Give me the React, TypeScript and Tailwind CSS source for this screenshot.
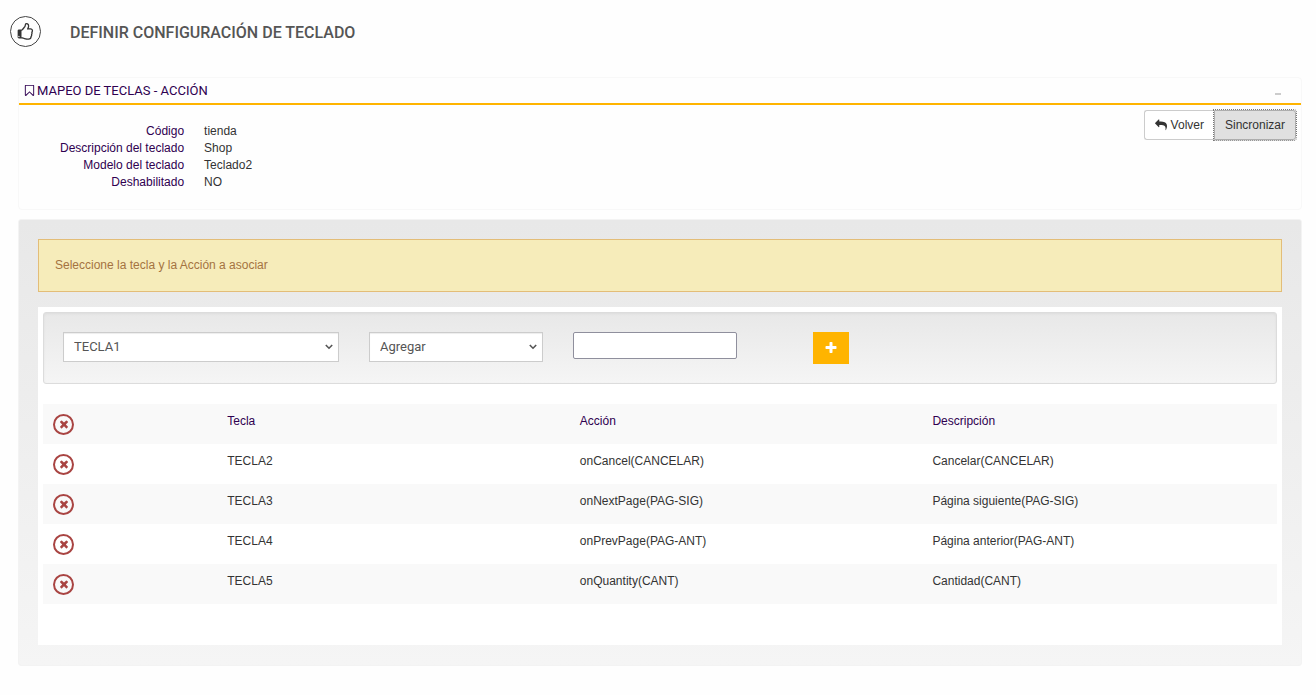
import React, { useState } from 'react';

interface KeyMapping {
  id: string;
  tecla: string;
  accion: string;
  descripcion: string;
}

interface IconProps {
  path: string;
  className?: string;
}

const ICONS = {
  thumbsUp:
    'M256 1344q0-26-19-45t-45-19-45 19-19 45 19 45 45 19 45-19 19-45zm1216-576q0-51-39-89.5t-89-38.5h-352q0-58 48-159.5t48-160.5q0-98-32-145t-128-47q-26 26-38 85t-30.5 125.5-59.5 109.5q-22 23-77 91-4 5-23 30t-31.5 41-34.5 42.5-40 44-38.5 35.5-40 27-35.5 9h-32v640h32q13 0 31.5 3t33 6.5 38 11 35 11.5 35.5 12.5 29 10.5q211 73 342 73h121q192 0 192-167 0-26-5-56 30-16 47.5-52.5t17.5-73.5-18-69q53-50 53-119 0-25-10-55.5t-25-47.5q32-1 53.5-47t21.5-81zm128-1q0 89-49 163 9 33 9 69 0 77-38 144 3 21 3 43 0 101-60 178 1 139-85 219.5t-227 80.5h-129q-96 0-189.5-22.5t-216.5-65.5q-116-40-138-40h-288q-53 0-90.5-37.5t-37.5-90.5v-640q0-53 37.5-90.5t90.5-37.5h274q36-24 137-155 58-75 107-128 24-25 35.5-85.5t30.5-126.5 62-108q39-37 90-37 84 0 151 32.5t102 101.5 35 186q0 93-48 192h176q104 0 180 76t76 179z',
  bookmark:
    'M1408 256h-1024v1242l423-406 89-85 89 85 423 406v-1242zm12-128q23 0 44 9 33 13 52.5 41t19.5 62v1289q0 34-19.5 62t-52.5 41q-19 8-44 8-48 0-83-32l-441-424-441 424q-36 33-83 33-23 0-44-9-33-13-52.5-41t-19.5-62v-1289q0-34 19.5-62t52.5-41q21-9 44-9h1048z',
  reply:
    'M1792 1120q0 166-127 451-3 7-10.5 24t-13.5 30-13 22q-12 17-28 17-15 0-23.5-10t-8.5-25q0-9 2.5-26.5t2.5-23.5q5-68 5-123 0-101-17.5-181t-48.5-138.5-80-101-105.5-69.5-133-42.5-154-21.5-175.5-6h-224v256q0 26-19 45t-45 19-45-19l-512-512q-19-19-19-45t19-45l512-512q19-19 45-19t45 19 19 45v256h224q713 0 875 403 53 134 53 333z',
  plus:
    'M1600 736v192q0 40-28 68t-68 28h-416v416q0 40-28 68t-68 28h-192q-40 0-68-28t-28-68v-416h-416q-40 0-68-28t-28-68v-192q0-40 28-68t68-28h416v-416q0-40 28-68t68-28h192q40 0 68 28t28 68v416h416q40 0 68 28t28 68z',
  times:
    'M1490 1322q0 40-28 68l-136 136q-28 28-68 28t-68-28l-294-294-294 294q-28 28-68 28t-68-28l-136-136q-28-28-28-68t28-68l294-294-294-294q-28-28-28-68t28-68l136-136q28-28 68-28t68 28l294 294 294-294q28-28 68-28t68 28l136 136q28 28 28 68t-28 68l-294 294 294 294q28 28 28 68z',
};

const details = [
  { label: 'Código', value: 'tienda' },
  { label: 'Descripción del teclado', value: 'Shop' },
  { label: 'Modelo del teclado', value: 'Teclado2' },
  { label: 'Deshabilitado', value: 'NO' },
];

const initialMappings: KeyMapping[] = [
  { id: '2', tecla: 'TECLA2', accion: 'onCancel(CANCELAR)', descripcion: 'Cancelar(CANCELAR)' },
  { id: '3', tecla: 'TECLA3', accion: 'onNextPage(PAG-SIG)', descripcion: 'Página siguiente(PAG-SIG)' },
  { id: '4', tecla: 'TECLA4', accion: 'onPrevPage(PAG-ANT)', descripcion: 'Página anterior(PAG-ANT)' },
  { id: '5', tecla: 'TECLA5', accion: 'onQuantity(CANT)', descripcion: 'Cantidad(CANT)' },
];

function Icon({ path, className }: IconProps) {
  return (
    <svg viewBox="0 0 1792 1792" fill="currentColor" aria-hidden="true" className={className}>
      <path d={path} />
    </svg>
  );
}

function SelectBox({ label, options, className }: { label: string; options: string[]; className: string }) {
  return (
    <div className={`relative ${className}`}>
      <select
        aria-label={label}
        className="block h-[30px] w-full appearance-none border border-[#ccc] bg-white pl-[10px] pr-6 font-[Roboto,sans-serif] text-[13px] text-[#555] shadow-[inset_0_1px_1px_rgba(0,0,0,0.075)]"
      >
        {options.map((option) => (
          <option key={option}>{option}</option>
        ))}
      </select>
      <svg
        viewBox="0 0 8 6"
        fill="none"
        stroke="#555"
        strokeWidth="1.6"
        aria-hidden="true"
        className="pointer-events-none absolute right-[6px] top-3 h-[6px] w-2"
      >
        <path d="M0.8 1 4 4.2 7.2 1" />
      </svg>
    </div>
  );
}

function DeleteButton({ label, onClick }: { label: string; onClick: () => void }) {
  return (
    <button
      type="button"
      aria-label={label}
      onClick={onClick}
      className="flex size-[21px] items-center justify-center rounded-full border-2 border-[#a94442] text-[#a94442]"
    >
      <Icon path={ICONS.times} className="size-3" />
    </button>
  );
}

export default function App() {
  const [mappings, setMappings] = useState(initialMappings);
  const [value, setValue] = useState('');

  const removeMapping = (id: string) => {
    setMappings(mappings.filter((mapping) => mapping.id !== id));
  };

  return (
    <div className="min-h-screen bg-[#fefefe] font-['Liberation_Sans',Arial,sans-serif] text-xs text-[#333]">
      {/* Page title */}
      <header className="flex items-center gap-[29px] px-[10px] pt-4">
        <span className="flex size-[31px] items-center justify-center rounded-full border border-[#444] text-[#333]">
          <Icon path={ICONS.thumbsUp} className="size-[18px]" />
        </span>
        <h1 className="pt-[2px] font-[Roboto,sans-serif] text-base font-medium text-[#555]">
          DEFINIR CONFIGURACIÓN DE TECLADO
        </h1>
      </header>

      <main className="pl-[18px] pr-[14px] pt-[30px]">
        {/* Keyboard details */}
        <section className="rounded border border-[#f8f8f8] bg-[#fefefe]">
          <div className="flex h-[27px] items-center justify-between border-b-2 border-[#ffb400] pl-1 pr-5">
            <h2 className="flex items-center font-[Roboto,sans-serif] text-[13px] text-[#2f0050]">
              <Icon path={ICONS.bookmark} className="mr-[1px] size-[13px]" />
              MAPEO DE TECLAS - ACCIÓN
            </h2>
            <button type="button" aria-label="Contraer" className="pt-[6px]">
              <span className="block h-[2px] w-[6px] bg-[#ccc]" />
            </button>
          </div>

          <div className="flex items-start justify-between pb-[18px] pr-[5px] pt-[5px]">
            <dl className="grid grid-cols-[auto_auto] gap-x-5 pl-[41px] pt-[13px] leading-[17px]">
              {details.map((detail) => (
                <React.Fragment key={detail.label}>
                  <dt className="text-right text-[#2f0050]">{detail.label}</dt>
                  <dd>{detail.value}</dd>
                </React.Fragment>
              ))}
            </dl>
            <div className="flex">
              <button
                type="button"
                className="flex h-[30px] items-center gap-1 rounded-l-[3px] border border-r-0 border-[#ccc] bg-white px-[10px]"
              >
                <Icon path={ICONS.reply} className="size-3" />
                Volver
              </button>
              <button
                type="button"
                className="h-[30px] rounded-r-[3px] border border-[#adadad] bg-[#e0e0e0] px-[10px] outline-1 outline-dotted outline-[#777]"
              >
                Sincronizar
              </button>
            </div>
          </div>
        </section>

        {/* Mapping editor */}
        <section className="mt-[9px] rounded-[3px] border border-[#f3f3f3] bg-linear-to-b from-[#e8e8e8] to-[#f5f5f5] p-[19px] pb-5">
          <p className="border border-[#e3bd78] bg-[#f6ecba] px-4 py-[17px] leading-[17px] text-[#a47341]">
            Seleccione la tecla y la Acción a asociar
          </p>

          <div className="mt-[15px] bg-white p-[5px] pb-[41px]">
            <form
              onSubmit={(e) => e.preventDefault()}
              className="grid grid-cols-12 gap-x-[30px] rounded-[3px] border border-[#dcdcdc] bg-linear-to-b from-[#e8e8e8] to-[#f5f5f5] p-[19px] shadow-[inset_0_1px_3px_rgba(0,0,0,0.05)]"
            >
              <SelectBox label="Tecla" options={['TECLA1']} className="col-span-3" />
              <SelectBox label="Acción" options={['Agregar']} className="col-span-2" />
              <input
                type="text"
                aria-label="Descripción"
                value={value}
                onChange={(e) => setValue(e.target.value)}
                className="col-span-2 h-[27px] w-[164px] rounded-xs border border-[#8f8f9d] bg-white px-1"
              />
              <div className="flex justify-end">
                <button
                  type="submit"
                  aria-label="Añadir"
                  className="flex h-8 w-9 items-center justify-center bg-[#ffb400] text-white"
                >
                  <Icon path={ICONS.plus} className="size-[14px]" />
                </button>
              </div>
            </form>

            <table className="mt-5 w-full table-fixed text-left">
              <thead>
                <tr className="h-10 bg-[#f9f9f9] text-[#2f0050]">
                  <th className="w-1/7 px-[10px] font-normal">
                    <DeleteButton label="Eliminar todo" onClick={() => setMappings([])} />
                  </th>
                  <th className="w-2/7 px-2 pt-[9px] align-top font-normal">Tecla</th>
                  <th className="w-2/7 px-2 pt-[9px] align-top font-normal">Acción</th>
                  <th className="w-2/7 px-2 pt-[9px] align-top font-normal">Descripción</th>
                </tr>
              </thead>
              <tbody>
                {mappings.map((mapping) => (
                  <tr key={mapping.id} className="h-10 even:bg-[#f9f9f9]">
                    <td className="px-[10px]">
                      <DeleteButton label={`Eliminar ${mapping.tecla}`} onClick={() => removeMapping(mapping.id)} />
                    </td>
                    <td className="px-2 pt-[9px] align-top">{mapping.tecla}</td>
                    <td className="px-2 pt-[9px] align-top">{mapping.accion}</td>
                    <td className="px-2 pt-[9px] align-top">{mapping.descripcion}</td>
                  </tr>
                ))}
              </tbody>
            </table>
          </div>
        </section>
      </main>
    </div>
  );
}
